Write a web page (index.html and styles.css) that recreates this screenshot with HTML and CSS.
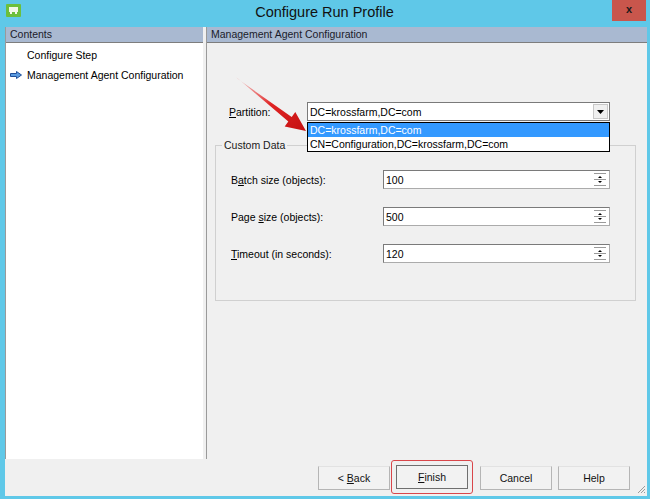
FILE: index.html
```html
<!DOCTYPE html>
<html lang="en">
<head>
  <meta charset="UTF-8" />
  <title>Configure Run Profile</title>
  <link rel="stylesheet" href="styles.css">
</head>
<body>

<div class="window">
  <div class="titlebar">
    <svg class="app-icon" width="15" height="13" viewBox="0 0 15 13">
      <rect x="0" y="0" width="15" height="13" rx="1" fill="#6cbf3c"/>
      <rect x="3" y="3" width="9" height="5" fill="#f2f7e8"/>
      <rect x="4" y="8" width="2" height="2" fill="#f2f7e8"/>
      <rect x="9" y="8" width="2" height="2" fill="#f2f7e8"/>
    </svg>
    <div class="title">Configure Run Profile</div>
    <div class="close">x</div>
  </div>

  <div class="client">
    <div class="panes">
      <div class="left-pane">
        <div class="pane-header">Contents</div>
        <ul class="steps">
          <li>Configure Step</li>
          <li class="current">
            <svg class="step-arrow" width="12" height="8" viewBox="0 0 12 8">
              <path d="M0.5 2.5 H6.5 V0.5 L11.5 4 L6.5 7.5 V5.5 H0.5 Z" fill="#5a9be0" stroke="#1f4f9a" stroke-width="1"/>
            </svg>
            Management Agent Configuration
          </li>
        </ul>
      </div>
      <div class="splitter"></div>
      <div class="right-pane">
        <div class="pane-header">Management Agent Configuration</div>
        <div class="form">
          <div class="partition-row">
            <label class="partition-label"><u>P</u>artition:</label>
            <div class="combo">
              <div class="combo-value">DC=krossfarm,DC=com</div>
              <div class="combo-button">
                <svg width="7" height="4" viewBox="0 0 7 4"><path d="M0 0 H7 L3.5 4 Z" fill="#000"/></svg>
              </div>
              <ul class="combo-list">
                <li class="selected">DC=krossfarm,DC=com</li>
                <li>CN=Configuration,DC=krossfarm,DC=com</li>
              </ul>
            </div>
          </div>

          <fieldset class="group">
            <legend>Custom Data</legend>
            <div class="field-row">
              <label>B<u>a</u>tch size (objects):</label>
              <div class="spin"><span>100</span><i class="spin-arrows"></i></div>
            </div>
            <div class="field-row">
              <label>Page <u>s</u>ize (objects):</label>
              <div class="spin"><span>500</span><i class="spin-arrows"></i></div>
            </div>
            <div class="field-row">
              <label><u>T</u>imeout (in seconds):</label>
              <div class="spin"><span>120</span><i class="spin-arrows"></i></div>
            </div>
          </fieldset>
        </div>
      </div>
    </div>

    <div class="buttonbar">
      <button class="btn">&lt; <u>B</u>ack</button>
      <span class="highlight"><button class="btn default"><u>F</u>inish</button></span>
      <button class="btn cancel">Cancel</button>
      <button class="btn">Help</button>
      <svg class="grip" width="10" height="10" viewBox="0 0 10 10">
        <path d="M9 2 L2 9 M9 5 L5 9 M9 8 L8 9" stroke="#9a9a9a" stroke-width="1"/>
      </svg>
    </div>
  </div>

  <svg class="red-arrow" width="90" height="70" viewBox="230 70 90 70">
    <defs>
      <linearGradient id="ar" x1="0" y1="0" x2="1" y2="1">
        <stop offset="0" stop-color="#f05050" stop-opacity="0.2"/>
        <stop offset="0.5" stop-color="#e02424"/>
        <stop offset="1" stop-color="#c41010"/>
      </linearGradient>
    </defs>
    <path d="M236.4 77.2 L237.6 78.8 L291.7 117 L295.3 112 L306 131 L284.7 126.4 L288.3 121.4 Z" fill="url(#ar)"/>
  </svg>
</div>

</body>
</html>
```

FILE: styles.css
```css
* {
  box-sizing: border-box;
}
body {
  margin: 0;
  font-family: 'Liberation Sans', Arial, sans-serif;
  font-size: 10.5px;
  color: #000;
}
.window {
  position: relative;
  width: 650px;
  height: 499px;
  background: #5fc8e8;
  display: flex;
  flex-direction: column;
  overflow: hidden;
}
.titlebar {
  height: 27px;
  display: flex;
  align-items: flex-start;
  position: relative;
}
.app-icon {
  margin: 4px 0 0 6px;
}
.title {
  flex: 1;
  text-align: center;
  font-size: 14.5px;
  line-height: 24px;
  color: #111;
  padding-left: 16px;
}
.close {
  width: 34px;
  height: 21px;
  margin-right: 4px;
  background: #c9564c;
  color: #1a1a1a;
  font-weight: bold;
  font-size: 11px;
  text-align: center;
  line-height: 19px;
}
.client {
  flex: 1;
  margin: 0 3px 3px 5px;
  background: #f0f0f0;
  display: flex;
  flex-direction: column;
}
.panes {
  flex: 1;
  display: flex;
}
.left-pane {
  width: 198px;
  flex-shrink: 0;
  background: #fff;
  border-left: 1px solid #9a9a9a;
}
.splitter {
  width: 4px;
  flex-shrink: 0;
  background: #f0f0f0;
  border-right: 1px solid #9a9a9a;
}
.right-pane {
  flex: 1;
  min-width: 0;
  display: flex;
  flex-direction: column;
}
.pane-header {
  height: 16px;
  background: #a9b9d1;
  border-bottom: 1px solid #7d7d7d;
  color: #1b1b2a;
  padding-left: 4px;
  line-height: 15px;
  white-space: nowrap;
}
.steps {
  list-style: none;
  margin: 0;
  padding: 2px 0 0 0;
}
.steps li {
  height: 20px;
  line-height: 20px;
  padding-left: 21px;
  white-space: nowrap;
  display: flex;
  align-items: center;
}
.steps li.current {
  padding-left: 4px;
}
.step-arrow {
  margin-right: 5px;
}
.form {
  padding: 59px 0 0 22px;
}
.partition-row {
  display: flex;
  align-items: center;
  height: 19px;
}
.partition-label {
  width: 78px;
}
.combo {
  position: relative;
  width: 303px;
  height: 19px;
  background: #fff;
  border: 1px solid #7a7a7a;
  display: flex;
  align-items: center;
}
.combo-value {
  flex: 1;
  padding-left: 2px;
}
.combo-button {
  width: 15px;
  height: 15px;
  margin-right: 1px;
  border: 1px solid #c8c8c8;
  background: #f0f0f0;
  display: flex;
  align-items: center;
  justify-content: center;
}
.combo-list {
  position: absolute;
  left: -1px;
  top: 19px;
  width: 303px;
  margin: 0;
  padding: 0;
  list-style: none;
  background: #fff;
  border: 1px solid #000;
  z-index: 2;
}
.combo-list li {
  height: 14px;
  line-height: 14px;
  padding-left: 2px;
}
.combo-list li.selected {
  background: #3399ff;
  color: #fff;
}
.group {
  margin: 18px 0 0 -14px;
  width: 421px;
  height: 162px;
  border: 1px solid #d0d0d0;
  padding: 19px 0 0 15px;
  display: flex;
  flex-direction: column;
  gap: 18px;
}
.group legend {
  padding: 0 2px;
  margin-left: -9px;
  color: #1a1a1a;
}
.field-row {
  display: flex;
  align-items: center;
  height: 19px;
}
.field-row label {
  width: 152px;
}
.spin {
  width: 227px;
  height: 19px;
  background: #fff;
  border: 1px solid #ababab;
  border-top-color: #7a7a7a;
  border-left-color: #7a7a7a;
  display: flex;
  align-items: center;
  justify-content: space-between;
  padding-left: 2px;
}
.spin-arrows {
  width: 12px;
  height: 13px;
  margin-right: 3px;
  border-top: 1px solid #9a9a9a;
  border-bottom: 1px solid #9a9a9a;
  position: relative;
  background:
    linear-gradient(#9a9a9a, #9a9a9a) 0 5px / 12px 1px no-repeat;
}
.spin-arrows::before,
.spin-arrows::after {
  content: '';
  position: absolute;
  left: 4px;
  border-left: 2px solid transparent;
  border-right: 2px solid transparent;
}
.spin-arrows::before {
  top: 2px;
  border-bottom: 2px solid #000;
}
.spin-arrows::after {
  bottom: 2px;
  border-top: 2px solid #000;
}
.buttonbar {
  height: 37px;
  display: flex;
  align-items: center;
  justify-content: flex-end;
  padding-right: 17px;
  position: relative;
}
.btn {
  width: 72px;
  height: 24px;
  font-family: inherit;
  font-size: 10.5px;
  color: #111;
  background: #f2f2f2;
  border: 1px solid #b5b5b5;
  border-top-color: #e2e2e2;
  margin-left: 6px;
  padding: 0;
}
.btn.default {
  border: 1px solid #6f6f6f;
  margin: 0;
}
.highlight {
  margin-left: 1px;
  padding: 4px;
  border: 1.5px solid #d9464a;
  border-radius: 3px;
  display: flex;
  margin-top: -1px;
}
.btn.cancel {
  margin-left: 7px;
}
.grip {
  position: absolute;
  right: 1px;
  bottom: 2px;
}
.red-arrow {
  position: absolute;
  left: 230px;
  top: 70px;
  z-index: 3;
}
```
